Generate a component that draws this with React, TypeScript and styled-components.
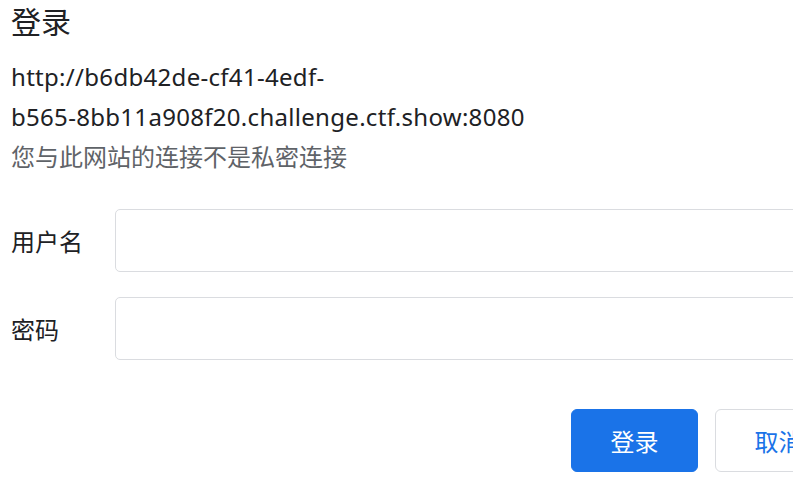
import styled, { createGlobalStyle } from 'styled-components';

const GlobalStyle = createGlobalStyle`
  html, body {
    margin: 0;
    padding: 0;
    overflow: hidden;
    background: #ffffff;
  }
  body {
    font-family: "Noto Sans", "Noto Sans CJK SC", sans-serif;
    color: #202124;
  }
`;

const Dialog = styled.div`
  width: 831px;
  padding: 2px 0 0 11px;
  display: flex;
  flex-direction: column;
`;

const Title = styled.h1`
  margin: 0;
  font-size: 30px;
  font-weight: 400;
  line-height: 40px;
  color: #202124;
`;

const Origin = styled.div`
  margin-top: 15px;
  font-size: 24px;
  letter-spacing: 0.3px;
  line-height: 40px;
  color: #202124;
  white-space: nowrap;
`;

const Warning = styled.div`
  font-size: 24px;
  line-height: 40px;
  color: #5f6368;
`;

const Form = styled.div`
  margin-top: 32px;
  display: flex;
  flex-direction: column;
  gap: 25px;
`;

const Row = styled.label`
  display: grid;
  grid-template-columns: 104px 1fr;
  align-items: center;
`;

const Label = styled.span`
  font-size: 24px;
  color: #202124;
`;

const Input = styled.input`
  height: 63px;
  box-sizing: border-box;
  border: 1px solid #dadce0;
  border-radius: 5px;
  padding: 0 16px;
  font-size: 24px;
  outline: none;
`;

const Actions = styled.div`
  margin-top: 49px;
  display: flex;
  justify-content: flex-end;
  gap: 17px;
`;

const Button = styled.button<{ $primary?: boolean }>`
  width: 127px;
  height: 63px;
  box-sizing: border-box;
  border-radius: 6px;
  font-family: "Noto Sans CJK SC", sans-serif;
  font-size: 24px;
  border: 1px solid ${(p) => (p.$primary ? '#1a73e8' : '#dadce0')};
  background: ${(p) => (p.$primary ? '#1a73e8' : '#ffffff')};
  color: ${(p) => (p.$primary ? '#ffffff' : '#1a73e8')};
  cursor: pointer;
`;

const App = () => {
  return (
    <>
      <GlobalStyle />
      <Dialog>
        <Title>登录</Title>
        <Origin>
          http://b6db42de-cf41-4edf-
          <br />
          b565-8bb11a908f20.challenge.ctf.show:8080
        </Origin>
        <Warning>您与此网站的连接不是私密连接</Warning>
        <Form>
          <Row>
            <Label>用户名</Label>
            <Input type="text" />
          </Row>
          <Row>
            <Label>密码</Label>
            <Input type="password" />
          </Row>
        </Form>
        <Actions>
          <Button $primary>登录</Button>
          <Button>取消</Button>
        </Actions>
      </Dialog>
    </>
  );
};

export default App;
